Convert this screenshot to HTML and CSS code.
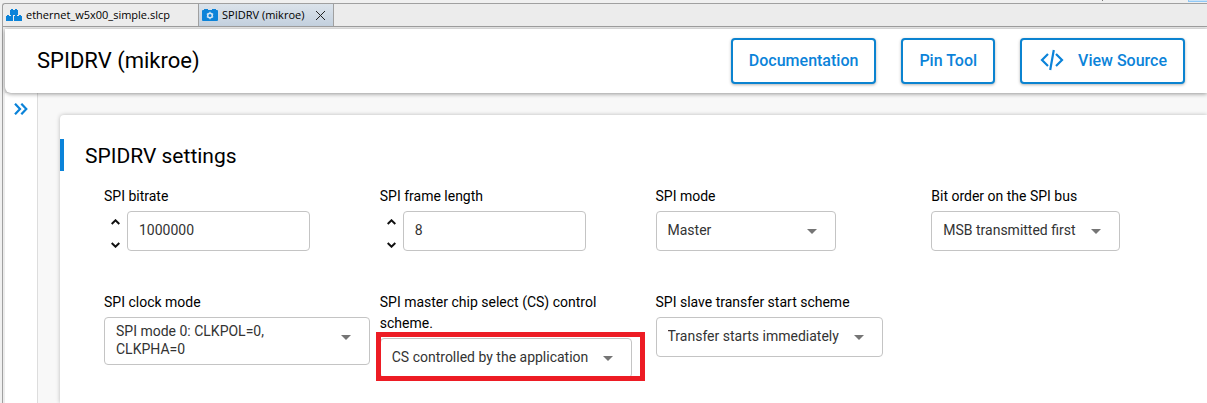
FILE: index.html
```html
<!DOCTYPE html>
<html lang="en">
<head>
<meta charset="utf-8">
<title>SPIDRV (mikroe)</title>
<meta name="viewport" content="width=device-width, initial-scale=1">
<link rel="stylesheet" href="styles.css">
</head>
<body>
<div class="toolbar"><i class="tick"></i><i class="toolbar-active"></i></div>
<div class="editor">
  <nav class="tabs" aria-label="Open editors">
    <button class="tab" type="button">
      <svg width="16" height="14" viewBox="0 0 16 14" fill="#0b83d9"><path d="M4 2h1V1h2v1h2V1h2v1h1v5H4zM0 8h1V7h2v1h2V7h2v6H0zM8 8h1V7h2v1h2V7h2v1h1v5H8z"/></svg>
      <span>ethernet_w5x00_simple.slcp</span>
    </button>
    <div class="tab tab-active">
      <svg width="16" height="14" viewBox="0 0 16 14"><path fill="#0b83d9" d="M0 3q0-1 1-1h1V1h4v1h4V1h4v1h1q1 0 1 1v9q0 1-1 1H1q-1 0-1-1z"/><circle cx="8" cy="7.500" r="2.300" fill="none" stroke="#d3e6f5" stroke-width="1.500"/><path stroke="#d3e6f5" stroke-width="1.300" d="M8 3.800v1M8 10.200v1M4.800 5.700l.9.500M10.300 8.800l.9.500M4.800 9.300l.9-.5M10.300 6.200l.9-.5"/></svg>
      <span>SPIDRV (mikroe)</span>
      <button class="tab-close" type="button" aria-label="Close"><svg width="9" height="9" viewBox="0 0 9 9" stroke="#222" fill="none"><path d="M0 0l9 9M9 0L0 9"/></svg></button>
    </div>
  </nav>
  <header class="header">
    <h1 class="title">SPIDRV (mikroe)</h1>
    <div class="actions">
      <button class="action" type="button">Documentation</button>
      <button class="action" type="button">Pin Tool</button>
      <button class="action" type="button"><svg class="code-icon" width="24" height="22" viewBox="0 0 24 22" fill="none" stroke="#0b83d9" stroke-width="2.200"><path d="M8 5L2 11l6 6M16 5l6 6-6 6M13.800 1l-3.600 20"/></svg>View Source</button>
    </div>
  </header>
  <div class="body">
    <aside class="side"><button class="expand" type="button" aria-label="Expand"><svg width="14" height="12" viewBox="0 0 14 12" fill="none" stroke="#0b83d9" stroke-width="2.200"><path d="M1 .7L6 6l-5 5.300M7.300.7l5 5.300-5 5.300"/></svg></button></aside>
    <main class="content">
      <section class="card">
        <h2 class="section-title">SPIDRV settings</h2>
        <div class="grid">
          <div class="field">
            <label for="bitrate">SPI bitrate</label>
            <div class="number">
              <div class="steps">
                <button type="button" aria-label="Increase bitrate"><svg width="9" height="6" viewBox="0 0 9 6"><path d="M.7 5l3.800-3.700L8.300 5"/></svg></button>
                <button type="button" aria-label="Decrease bitrate"><svg width="9" height="6" viewBox="0 0 9 6"><path d="M.7 1l3.800 3.700L8.300 1"/></svg></button>
              </div>
              <input id="bitrate" type="text" inputmode="numeric" value="1000000">
            </div>
          </div>
          <div class="field">
            <label for="frame">SPI frame length</label>
            <div class="number">
              <div class="steps">
                <button type="button" aria-label="Increase length"><svg width="9" height="6" viewBox="0 0 9 6"><path d="M.7 5l3.800-3.700L8.300 5"/></svg></button>
                <button type="button" aria-label="Decrease length"><svg width="9" height="6" viewBox="0 0 9 6"><path d="M.7 1l3.800 3.700L8.300 1"/></svg></button>
              </div>
              <input id="frame" type="text" inputmode="numeric" value="8">
            </div>
          </div>
          <div class="field">
            <label for="mode">SPI mode</label>
            <select id="mode"><button><selectedcontent></selectedcontent></button><option selected>Master</option></select>
          </div>
          <div class="field">
            <label for="order">Bit order on the SPI bus</label>
            <select id="order"><button><selectedcontent></selectedcontent></button><option selected>MSB transmitted first</option></select>
          </div>
          <div class="field">
            <label for="clock">SPI clock mode</label>
            <select id="clock"><button><selectedcontent></selectedcontent></button><option selected>SPI mode 0: CLKPOL=0, CLKPHA=0</option></select>
          </div>
          <div class="field">
            <label for="cs">SPI master chip select (CS) control scheme.</label>
            <div class="marked">
              <select id="cs"><button><selectedcontent></selectedcontent></button><option selected>CS controlled by the application</option></select>
            </div>
          </div>
          <div class="field">
            <label for="start">SPI slave transfer start scheme</label>
            <select id="start"><button><selectedcontent></selectedcontent></button><option selected>Transfer starts immediately</option></select>
          </div>
        </div>
      </section>
    </main>
  </div>
</div>
</body>
</html>
```
FILE: styles.css
```css
* { box-sizing: border-box; }
body {
  margin: 0;
  min-height: 100vh;
  display: flex;
  flex-direction: column;
  background: #f0f0f0;
  color: #000;
  font: 14px/21px Roboto, sans-serif;
}
button, input, select { font: inherit; color: inherit; }
button { margin: 0; padding: 0; border: 0; background: none; cursor: pointer; }
svg { display: block; flex: none; }

.toolbar { height: 3px; display: flex; justify-content: flex-end; gap: 85px; }
.tick { width: 1px; height: 1px; background: #777; }
.toolbar-active { width: 19px; height: 2px; background: #cce4f7; border: solid #90c8f6; border-width: 0 0 1px 1px; }

.editor {
  flex: 1;
  display: flex;
  flex-direction: column;
  margin-left: 2px;
  padding-left: 2px;
  border: solid #a0a0a0;
  border-width: 1px 0 0 1px;
  border-top-left-radius: 3px;
  background: #ececec;
}
.tabs {
  display: flex;
  height: 23px;
  margin: 0 0 2px -2px;
  border-bottom: 1px solid #a0a0a0;
  font: 11px/22px "Open Sans", "Noto Sans", sans-serif;
}
.tab { display: flex; align-items: center; gap: 4px; width: 195px; padding-left: 3px; }
.tab-active {
  width: 136px;
  border: solid #a0a0a0;
  border-width: 0 1px;
  background: linear-gradient(#dbe3eb, #c3d0de);
}
.tab-close { margin-left: 8px; }

.header {
  position: relative;
  z-index: 1;
  display: flex;
  align-items: center;
  justify-content: space-between;
  height: 64px;
  padding: 0 22px 0 32px;
  border-bottom-left-radius: 6px;
  background: #fff;
  box-shadow: 0 1px 4px rgba(0, 0, 0, .4);
}
.title, .section-title { margin: 0; font-weight: 400; }
.title { font-size: 22px; line-height: 32px; }
.section-title { padding: 2px 0 0 21px; border-left: 4px solid #0b83d9; font-size: 21px; line-height: 30px; }
.actions { display: flex; gap: 25px; }
.action {
  display: flex;
  align-items: center;
  height: 46px;
  padding: 0 16px 2px;
  border: 2px solid #0b83d0;
  border-radius: 4px;
  background: #fff;
  box-shadow: 0 1px 3px rgba(0, 0, 0, .3);
  color: #0b83d9;
  font-size: 16px;
  font-weight: 500;
}
.code-icon { margin: 0 14px 0 2px; }

.body { flex: 1; display: flex; }
.side { width: 33px; border-right: 1px solid #ddd; background: #fff; }
.expand { display: block; padding: 10px 9px; }
.content { flex: 1; display: flex; padding: 22px 0 0 22px; background: #f8f8f8; min-width: 0; }
.card {
  flex: 1;
  min-width: 0;
  padding: 24px 0;
  border-top-left-radius: 4px;
  background: #fff;
  box-shadow: 0 0 4px rgba(0, 0, 0, .25);
}
.grid {
  display: grid;
  grid-template-columns: repeat(auto-fill, minmax(240px, 1fr));
  row-gap: 20px;
  padding: 15px 0 0 44px;
}
.field { display: flex; flex-direction: column; align-items: flex-start; gap: 4px; min-height: 86px; padding-right: 10px; }

.number { display: flex; }
.steps { display: flex; flex-direction: column; justify-content: space-between; width: 23px; padding-top: 5px; }
.steps button { display: grid; place-items: center; height: 12px; }
.steps svg { fill: none; stroke: #111; stroke-width: 2; }
input {
  width: 183px;
  height: 40px;
  padding: 0 11px 2px;
  border: 1px solid #c4c4c4;
  border-radius: 4px;
  background: #fff;
  color: #333;
}
select, select::picker(select) { appearance: base-select; }
select {
  display: flex;
  align-items: center;
  justify-content: space-between;
  gap: 15px;
  min-width: 180px;
  max-width: 100%;
  min-height: 40px;
  padding: 4px 18px 6px 11px;
  border: 1px solid #c4c4c4;
  border-radius: 4px;
  background: #fff;
  color: #333;
  line-height: 18px;
}
select button { min-width: 0; white-space: normal; text-align: left; }
select::picker-icon {
  content: "";
  flex: none;
  align-self: flex-start;
  width: 0;
  height: 0;
  margin-top: 13px;
  border: solid transparent;
  border-width: 5px 5px 0;
  border-top-color: #757575;
}
.marked { position: relative; max-width: 100%; }
.marked::after {
  content: "";
  position: absolute;
  inset: -6px -13px -3px -4px;
  border: 5px solid #ed1c24;
  pointer-events: none;
}
```
